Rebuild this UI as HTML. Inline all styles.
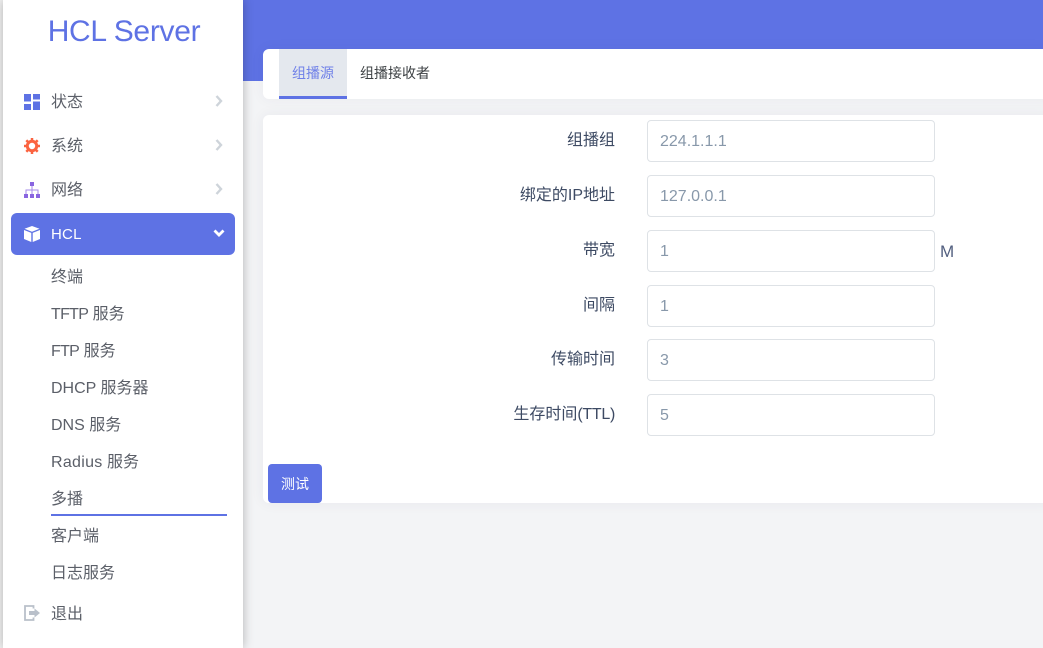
<!DOCTYPE html>
<html lang="zh">
<head>
<meta charset="utf-8">
<title>HCL Server</title>
<style>
*{box-sizing:border-box;margin:0;padding:0}
html,body{width:1043px;height:648px;overflow:hidden;background:#f3f4f6;font-family:"Liberation Sans","Noto Sans CJK SC",sans-serif}
.abs{position:absolute}
#top{left:243px;top:0;width:800px;height:81px;background:#5e72e4}
#side{left:3px;top:0;width:240px;height:648px;background:#fff;box-shadow:0 0 10px rgba(0,0,0,.28)}
#strip{left:0;top:0;width:3px;height:648px;background:#f3f3f3}
#logo{left:4px;top:13px;width:240px;text-align:center;font-size:30px;letter-spacing:-.3px;line-height:38px;color:#5e72e4;white-space:nowrap}
.m,.s{left:51px;font-size:16px;line-height:22px;color:#5b5f68;white-space:nowrap}
#active{left:11px;top:213px;width:224px;height:42px;background:#5e72e4;border-radius:6px}
#tabs{left:263px;top:49px;width:790px;height:50px;background:#fff;border-radius:6px;box-shadow:0 0 14px rgba(50,50,93,.05)}
#tab1{left:279px;top:49px;width:68px;height:50px;background:#e4e8ee;border-bottom:3px solid #5e72e4;text-align:center;font-size:14px;line-height:49px;color:#6f80e8}
#tab2{left:360px;top:49px;font-size:14px;line-height:49px;color:#3c4043;white-space:nowrap}
#card{left:263px;top:115px;width:790px;height:388px;background:#fff;border-radius:6px;box-shadow:0 0 14px rgba(50,50,93,.06)}
.l{right:428px;font-size:16px;line-height:22px;color:#3d4a63;text-align:right;white-space:nowrap}
.i{left:647px;width:288px;height:42px;border:1px solid #dee2e6;border-radius:4px;background:#fff;padding-left:12px;font-size:16px;line-height:42px;color:#8898aa}
#btn{left:268px;top:464px;width:54px;height:39px;background:#5e72e4;border-radius:4px;color:#fff;font-size:14px;line-height:40px;text-align:center}
svg{position:absolute;display:block}
</style>
</head>
<body>
<div class="abs" id="top"></div>
<div class="abs" id="tabs"></div>
<div class="abs" id="tab1">组播源</div>
<div class="abs" id="tab2">组播接收者</div>
<div class="abs" id="card"></div>

<div class="abs l" style="top:130px">组播组</div>
<div class="abs i" style="top:120px">224.1.1.1</div>
<div class="abs l" style="top:185px">绑定的IP地址</div>
<div class="abs i" style="top:175px">127.0.0.1</div>
<div class="abs l" style="top:240px">带宽</div>
<div class="abs i" style="top:230px">1</div>
<div class="abs" style="left:940px;top:241px;font-size:17px;line-height:22px;color:#525f7f">M</div>
<div class="abs l" style="top:295px">间隔</div>
<div class="abs i" style="top:285px">1</div>
<div class="abs l" style="top:349px">传输时间</div>
<div class="abs i" style="top:339px">3</div>
<div class="abs l" style="top:404px">生存时间<span style="letter-spacing:-.3px">(TTL)</span></div>
<div class="abs i" style="top:394px">5</div>
<div class="abs" id="btn">测试</div>

<div class="abs" id="strip"></div>
<div class="abs" id="side"></div>
<div class="abs" id="logo">HCL Server</div>

<svg style="left:24px;top:94px" width="16" height="16" viewBox="0 0 16 16"><path fill="#5e72e4" d="M0 0h7v7.500H0zM9 0h7v5.500H9zM9 7.500h7V16H9zM0 10h7v6H0z"/></svg>
<div class="abs m" style="top:92px">状态</div>
<svg style="left:215px;top:95px" width="8" height="12" viewBox="0 0 8 12"><path fill="none" stroke="#ced4da" stroke-width="2.400" d="M1.500 1l4.500 5-4.500 5"/></svg>

<svg style="left:24px;top:138px" width="16" height="16" viewBox="0 0 16 16"><circle cx="8" cy="8" r="4.700" fill="none" stroke="#fb6340" stroke-width="3"/><path fill="none" stroke="#fb6340" stroke-width="2.500" d="M8 0v3M8 13v3M0 8h3M13 8h3M2.300 2.300l2.200 2.200M11.500 11.500l2.200 2.200M2.300 13.700l2.200-2.200M11.500 4.500l2.200-2.200"/></svg>
<div class="abs m" style="top:136px">系统</div>
<svg style="left:215px;top:139px" width="8" height="12" viewBox="0 0 8 12"><path fill="none" stroke="#ced4da" stroke-width="2.400" d="M1.500 1l4.500 5-4.500 5"/></svg>

<svg style="left:24px;top:182px" width="16" height="16" viewBox="0 0 16 16"><path fill="#8965e0" d="M6 0h4v4H6zM0 12h4v4H0zM6 12h4v4H6zM12 12h4v4h-4z"/><path fill="none" stroke="#a58ae8" d="M8 4v8M2 12V8h12v4"/></svg>
<div class="abs m" style="top:180px">网络</div>
<svg style="left:215px;top:183px" width="8" height="12" viewBox="0 0 8 12"><path fill="none" stroke="#ced4da" stroke-width="2.400" d="M1.500 1l4.500 5-4.500 5"/></svg>

<div class="abs" id="active"></div>
<svg style="left:24px;top:226px" width="16" height="16" viewBox="0 0 16 16"><path fill="#fff" d="M8 0l7.500 2.800L8 5.700.5 2.800zM0 4l7.300 2.900V16L0 13zM16 4L8.700 6.900V16L16 13z"/></svg>
<div class="abs m" style="top:224px;color:#fff;font-size:15px;letter-spacing:.2px">HCL</div>
<svg style="left:213px;top:229px" width="12" height="9" viewBox="0 0 12 9"><path fill="none" stroke="#fff" stroke-width="2.800" d="M1.500 1.500L6 6l4.500-4.500"/></svg>

<div class="abs s" style="top:267px">终端</div>
<div class="abs s" style="top:304px"><span style="letter-spacing:-.7px">TFTP</span> 服务</div>
<div class="abs s" style="top:341px"><span style="letter-spacing:-.7px">FTP</span> 服务</div>
<div class="abs s" style="top:378px">DHCP 服务器</div>
<div class="abs s" style="top:415px">DNS 服务</div>
<div class="abs s" style="top:452px"><span style="letter-spacing:.3px">Radius</span> 服务</div>
<div class="abs s" style="top:489px">多播</div>
<div class="abs" style="left:51px;top:514px;width:176px;height:2px;background:#5e72e4"></div>
<div class="abs s" style="top:526px">客户端</div>
<div class="abs s" style="top:563px">日志服务</div>

<svg style="left:24px;top:605px" width="16" height="16" viewBox="0 0 16 16"><path fill="none" stroke="#b9c0ca" stroke-width="1.800" d="M9.500 3.500V1H1v14h8.500v-2.500"/><path fill="#b9c0ca" d="M5 6h5.500V3.500L16 8l-5.500 4.500V10H5z"/></svg>
<div class="abs m" style="top:604px">退出</div>
</body>
</html>
